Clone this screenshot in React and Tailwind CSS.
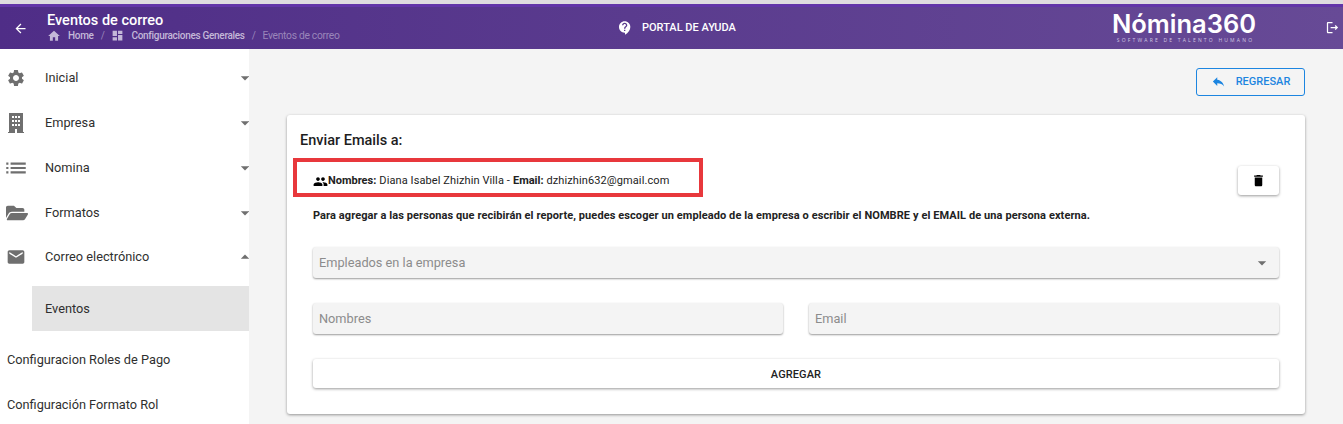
import React from 'react';
import {
  MdArrowBack, MdHome, MdDashboard, MdContactSupport, MdSettings, MdList,
  MdEmail, MdArrowDropDown, MdArrowDropUp, MdReply, MdPeople, MdDelete, MdOutlineLogout,
} from 'react-icons/md';
import { FaFolderOpen } from 'react-icons/fa';

function BuildingIcon({ className }) {
  return (
    <svg viewBox="0 0 16 20" width="16" height="20" className={className} fill="currentColor">
      <path fillRule="evenodd" d="M1 0h14v19h1v1H0v-1h1zM4 3v2h2V3zm3 0v2h2V3zm3 0v2h2V3zM4 7v2h2V7zm3 0v2h2V7zm3 0v2h2V7zM4 11v2h2v-2zm3 0v2h2v-2zm3 0v2h2v-2zM7 16v4h2v-4z" />
    </svg>
  );
}

const menuItems = [
  { name: 'Inicial', icon: <MdSettings size={20} className="ml-[6px] text-[#6f6f6f]" /> },
  { name: 'Empresa', icon: <span className="ml-2 w-[18px]"><BuildingIcon className="text-[#6f6f6f]" /></span> },
  { name: 'Nomina', icon: <MdList size={26} className="ml-[3px] -mr-[3px] text-[#6f6f6f]" /> },
  { name: 'Formatos', icon: <FaFolderOpen size={22} className="ml-[6px] -mr-[2px] text-[#6f6f6f]" /> },
  { name: 'Correo electrónico', icon: <MdEmail size={20} className="ml-[6px] text-[#6f6f6f]" />, open: true },
];

function Header() {
  return (
    <header className="h-[49px] shrink-0 flex flex-col">
      <div className="h-1 bg-[#dedcdf]" />
      <div className="h-[3px] bg-[#6235a8]" />
      <div className="flex-1 flex items-center bg-gradient-to-r from-[#4f2d87] to-[#674a96] text-white">
        <div className="w-[47px] flex justify-center -ml-[3px] mr-[3px]"><MdArrowBack size={15} /></div>
        <div className="w-[571px] -mt-[2px]">
          <div className="text-[14.5px] leading-[17px] font-medium">Eventos de correo</div>
          <div className="flex items-center text-[10px] leading-[13px] text-[#c4b8d8] tracking-[-0.3px]">
            <MdHome size={14} />
            <span className="ml-[7px] font-medium">Home</span>
            <span className="mx-[7px] font-normal text-[#9a86ba]">/</span>
            <MdDashboard size={13} />
            <span className="ml-[7px] font-medium">Configuraciones Generales</span>
            <span className="mx-[7px] font-normal text-[#9a86ba]">/</span>
            <span className="text-[10.3px] text-[#9a86ba]">Eventos de correo</span>
          </div>
        </div>
        <div className="flex items-center w-[460px]">
          <MdContactSupport size={16} className="-ml-px" />
          <span className="ml-[9px] text-[11px] font-medium">PORTAL DE AYUDA</span>
        </div>
        <div className="w-[212px] flex flex-col items-center -mt-[1px]">
          <span className="font-['Inter',sans-serif] text-[25.5px] leading-[24px] font-semibold">Nómina360</span>
          <span className="font-['Open_Sans',sans-serif] text-[5px] leading-[6px] mt-[1px] ml-[3px] tracking-[2.2px] text-[#d0c6e0]">SOFTWARE DE TALENTO HUMANO</span>
        </div>
        <div className="ml-auto pr-[3px] -mt-[2px]"><MdOutlineLogout size={15} /></div>
      </div>
    </header>
  );
}

function Sidebar() {
  return (
    <aside className="w-[249px] shrink-0 bg-white pt-[6px] text-[12.75px] text-[#2f2f2f] overflow-hidden">
      {menuItems.map((item) => (
        <div key={item.name} className={item.open ? 'h-[45px] flex items-center pb-[1px]' : 'h-[45px] flex items-center'}>
          {item.icon}
          <span className="ml-[19px] flex-1">{item.name}</span>
          {item.open
            ? <MdArrowDropUp size={20} className="text-[#6f6f6f] -mr-[6px]" />
            : <MdArrowDropDown size={20} className="text-[#6f6f6f] -mr-[6px]" />}
        </div>
      ))}
      <div className="h-[45px] mt-[6px] ml-8 bg-[#e4e4e4] flex items-center pl-[13px]">Eventos</div>
      <div className="h-[45px] mt-[6px] flex items-center pl-[7px]">Configuracion Roles de Pago</div>
      <div className="h-[45px] flex items-center pl-[7px]">Configuración Formato Rol</div>
    </aside>
  );
}

function Main() {
  return (
    <main className="flex-1 bg-[#f4f4f4] pl-[38px] pr-[38px] pt-[19px] overflow-hidden">
      <div className="flex justify-end">
        <button className="w-[109px] h-7 rounded-[3px] border border-[#1c85e0] flex items-center justify-center pt-[1px] text-[#1c85e0] text-[11px] font-medium">
          <MdReply size={15} className="mr-[10px] -mt-[2px]" />
          REGRESAR
        </button>
      </div>
      <section className="relative mt-[19px] h-[299px] bg-white rounded-[3px] shadow-[0_1px_3px_rgba(0,0,0,0.4)] px-[26px] pt-[17px]">
        <h2 className="-ml-[13px] text-[14.5px] leading-[17px] font-medium text-[#1d1d1d]">Enviar Emails a:</h2>
        <div className="flex items-center justify-between mt-[17px] h-[29px]">
          <div className="flex items-center pt-[1px] text-[11px] text-[#222]">
            <MdPeople size={15} className="text-black" />
            <b className="font-bold">Nombres:</b>
            <span className="ml-[3px] tracking-[0.1px]">Diana Isabel Zhizhin Villa - </span>
            <b className="font-bold ml-[3px]">Email:</b>
            <span className="ml-[3px] tracking-[0.1px]">dzhizhin632@gmail.com</span>
          </div>
          <button className="w-[41px] h-[29px] rounded-[3px] bg-white shadow-[0_1px_3px_rgba(0,0,0,0.4)] flex items-center justify-center">
            <MdDelete size={15} className="text-black" />
          </button>
        </div>
        <p className="mt-[14px] text-[11px] leading-[13px] font-bold text-[#222] tracking-[0.087px]">
          Para agregar a las personas que recibirán el reporte, puedes escoger un empleado de la empresa o escribir el NOMBRE y el EMAIL de una persona externa.
        </p>
        <div className="mt-[25px] h-[31px] bg-[#f4f4f4] rounded-[3px] shadow-[0_1px_2px_rgba(0,0,0,0.4)] flex items-center justify-between pl-[6px] pr-[7px] pt-[1px] text-[12.75px] text-[#8c8c8c]">
          Empleados en la empresa
          <MdArrowDropDown size={20} className="text-[#6f6f6f]" />
        </div>
        <div className="mt-[25px] grid grid-cols-2 gap-[26px]">
          <div className="h-[31px] bg-[#f4f4f4] rounded-[3px] shadow-[0_1px_2px_rgba(0,0,0,0.4)] flex items-center pl-[6px] pt-[1px] text-[12.75px] text-[#8c8c8c]">Nombres</div>
          <div className="h-[31px] bg-[#f4f4f4] rounded-[3px] shadow-[0_1px_2px_rgba(0,0,0,0.4)] flex items-center pl-[6px] pt-[1px] text-[12.75px] text-[#8c8c8c]">Email</div>
        </div>
        <button className="mt-[25px] w-full h-[29px] pt-[3px] bg-white rounded-[3px] shadow-[0_1px_3px_rgba(0,0,0,0.4)] text-[11px] tracking-[0.1px] font-medium text-[#222]">
          AGREGAR
        </button>
        {/* recuadro rojo de la captura */}
        <div className="absolute left-[6px] top-[43px] w-[410px] h-[39px] border-4 border-[#e8383c]" />
      </section>
    </main>
  );
}

export default function App() {
  return (
    <div className="h-[424px] w-[1343px] overflow-hidden flex flex-col font-['Roboto',sans-serif]">
      <Header />
      <div className="flex-1 flex min-h-0">
        <Sidebar />
        <Main />
      </div>
    </div>
  );
}
